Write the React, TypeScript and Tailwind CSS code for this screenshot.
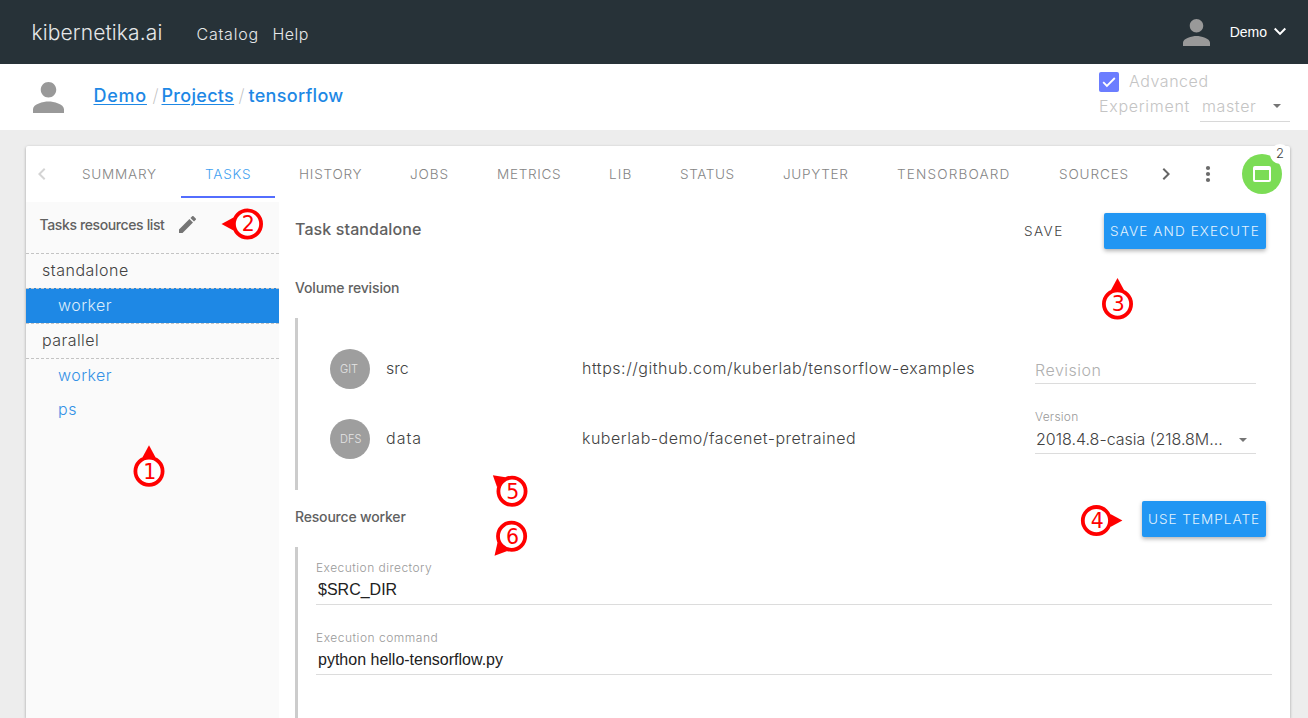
import React from "react";

const tabs = [
  { label: "SUMMARY", cls: "w-[123px] tracking-[0.75px]" },
  { label: "TASKS", cls: "w-[94px] tracking-[0.75px]", active: true },
  { label: "HISTORY", cls: "w-[111px] tracking-[0.75px]" },
  { label: "JOBS", cls: "w-[87px] tracking-[0.9px]" },
  { label: "METRICS", cls: "w-[112px] tracking-[0.65px]" },
  { label: "LIB", cls: "w-[71px] tracking-[1.1px]" },
  { label: "STATUS", cls: "w-[103px] tracking-[0.55px]" },
  { label: "JUPYTER", cls: "w-[114px] tracking-[0.65px]" },
  { label: "TENSORBOARD", cls: "w-[162px] tracking-[1.15px]" },
  { label: "SOURCES", cls: "w-[118px] tracking-[0.85px]" },
];

const markers = [
  { n: "1", angle: 0, tip: 26, dx: 0, dy: 0.3, cls: "left-[119px] top-[441px]" },
  { n: "2", angle: -90, tip: 26, dx: 0.5, dy: 0, cls: "left-[217px] top-[194px]" },
  { n: "3", angle: 0, tip: 26, dx: 0.5, dy: 0, cls: "left-[1087px] top-[274px]" },
  { n: "4", angle: 90, tip: 26, dx: 0.4, dy: 0.6, cls: "left-[1066px] top-[490px]" },
  { n: "5", angle: -50, tip: 25, dx: 0, dy: 0.2, cls: "left-[482px] top-[461px]" },
  { n: "6", angle: -139, tip: 26, dx: 0.6, dy: 0.2, cls: "left-[481px] top-[506px]" },
];

function Person({ className }: { className: string }) {
  return (
    <svg viewBox="4 4 16 16" className={className} fill="#999">
      <path d="M12 12c2.21 0 4-1.79 4-4s-1.79-4-4-4-4 1.79-4 4 1.79 4 4 4zm0 2c-2.67 0-8 1.34-8 4v2h16v-2c0-2.66-5.33-4-8-4z" />
    </svg>
  );
}

function Chevron({ d, className }: { d: string; className: string }) {
  return (
    <svg viewBox="0 0 24 24" className={className} fill="currentColor">
      <path d={d} />
    </svg>
  );
}

function Caret() {
  return (
    <svg viewBox="0 0 8 4" className="mt-px h-1 w-2 shrink-0" fill="#757575">
      <path d="M0 0h8L4 4z" />
    </svg>
  );
}

function Marker({ n, angle, tip, dx, dy, cls }: {
  n: string; angle: number; tip: number; dx: number; dy: number; cls: string;
}) {
  return (
    <svg viewBox="-30 -30 60 60" className={`absolute h-[60px] w-[60px] ${cls}`}>
      <g transform={`translate(${dx} ${dy})`}>
        <path d={`M0 ${-tip}L6.5 -14H-6.5z`} fill="#f00" transform={`rotate(${angle})`} />
        <circle r="13.6" fill="#fff" stroke="#f00" strokeWidth="3.8" />
        <text x="0.8" y="7.3" textAnchor="middle" fill="#f00" className="font-['DejaVu_Sans'] text-[20.5px] font-normal">
          {n}
        </text>
      </g>
    </svg>
  );
}

function Volume({ badge, name, url, nameCls, urlCls, children }: {
  badge: string; name: string; url: string; nameCls: string; urlCls: string; children: React.ReactNode;
}) {
  return (
    <div className="flex h-[70px] items-center">
      <div className="flex h-10 w-10 shrink-0 items-center rounded-full bg-[#9e9e9e] pl-[10px] text-[11px] text-[#e4e4e4]">{badge}</div>
      <div className={`w-[196px] shrink-0 pb-[2px] pl-4 ${nameCls}`}>{name}</div>
      <div className={`w-[469px] shrink-0 pb-[2px] pl-4 ${urlCls}`}>{url}</div>
      <div className="flex h-full w-[221px] shrink-0 flex-col">{children}</div>
    </div>
  );
}

export default function App() {
  return (
    <div className="relative flex h-[718px] w-[1308px] flex-col overflow-hidden bg-[#ededed] font-['Inter',sans-serif] text-base font-light text-[#424242]">
      <header className="flex h-16 shrink-0 items-center bg-[#273238] text-[#e6e8e9]">
        <div className="w-[165px] pt-px pl-[31.5px] text-[21px] tracking-[0.12px]">kibernetika.ai</div>
        <nav className="flex flex-1 pt-[3px]">
          <span className="w-[76px] pl-[31.5px] tracking-[0.76px]">Catalog</span>
          <span className="pl-[31.5px] tracking-[0.5px]">Help</span>
        </nav>
        <Person className="mr-[20px] h-[27px] w-[27px]" />
        <span className="font-['Liberation_Sans',sans-serif] text-sm font-normal text-white">Demo</span>
        <Chevron className="mr-4 ml-px h-6 w-6 text-white" d="M7.41 7.84L12 12.42l4.59-4.58L18 9.25l-6 6-6-6z" />
      </header>

      <section className="flex h-[66px] shrink-0 bg-white">
        <Person className="mt-[18px] ml-[33px] h-[31px] w-[31px]" />
        <div className="flex flex-1 pt-[18px] pl-[29.5px] text-lg leading-[27px] font-medium text-[#1e88e5]">
          <span className="w-[54px] tracking-[0.75px] underline decoration-1 underline-offset-2">Demo</span>
          <span className="w-[14px] pl-[5px] font-extralight text-[#bbb]">/</span>
          <span className="w-[73px] tracking-[0.3px] underline decoration-1 underline-offset-2">Projects</span>
          <span className="w-[14px] pl-[4px] font-extralight text-[#bbb]">/</span>
          <span className="tracking-[0.3px]">tensorflow</span>
        </div>
        <div className="w-[209px] pt-2 text-[#c4c4c4]">
          <div className="flex h-5 items-center">
            <div className="mr-[10px] flex h-5 w-5 items-center justify-center rounded-[2px] bg-[#6b7dff]">
              <svg viewBox="0 0 20 20" className="h-5 w-5" fill="none" stroke="#fff" strokeWidth="1.8">
                <path d="M4.2 10.2l3.7 3.7L15.8 6" />
              </svg>
            </div>
            <span className="pb-[2px] tracking-[0.55px]">Advanced</span>
          </div>
          <div className="flex h-[30px]">
            <span className="w-[101px] pt-[2px] tracking-[0.7px]">Experiment</span>
            <div className="flex w-[90px] items-center border-b border-[#d8d8d8] pb-0.5">
              <span className="w-[73px] pl-0.5 tracking-[0.62px]">master</span>
              <Caret />
            </div>
          </div>
        </div>
      </section>

      <main className="mt-4 ml-[26px] flex w-[1264px] flex-1 flex-col rounded-t-[2px] bg-white shadow-[0_1px_3px_rgba(0,0,0,0.35)]">
        <div className="flex h-14 shrink-0 items-center">
          <div className="flex w-8 justify-center text-[#d4d4d4]">
            <Chevron className="h-6 w-6" d="M15.41 7.41L14 6l-6 6 6 6 1.41-1.41L10.83 12z" />
          </div>
          {tabs.map((t) => (
            <div
              key={t.label}
              className={`mb-1 flex h-[52px] items-center border-b-2 pt-[6px] pl-6 text-[13.6px] whitespace-nowrap ${t.cls} ${
                t.active ? "border-[#536dfe] text-[#3f9ff0]" : "border-transparent text-[#858585]"
              }`}
            >
              {t.label}
            </div>
          ))}
          <Chevron className="ml-[1px] h-6 w-6 text-[#666]" d="M10 6L8.59 7.41 13.17 12l-4.58 4.59L10 18l6-6z" />
          <svg viewBox="0 0 24 24" className="ml-[18px] h-6 w-6" fill="#6b6b6b">
            <circle cx="12" cy="6" r="2.1" />
            <circle cx="12" cy="12" r="2.1" />
            <circle cx="12" cy="18" r="2.1" />
          </svg>
          <div className="relative ml-[22px] flex h-10 w-10 items-center justify-center rounded-full bg-[#7bdc55]">
            <svg viewBox="0 0 20 18" className="h-[18px] w-5" fill="#fff">
              <path fillRule="evenodd" d="M3 1h14a2 2 0 0 1 2 2v12a2 2 0 0 1-2 2H3a2 2 0 0 1-2-2V3a2 2 0 0 1 2-2zm0 4v10h14V5z" />
            </svg>
            <span className="absolute -top-[10px] -right-[8px] flex h-5 w-5 items-center justify-center rounded-full bg-white text-[13px] text-[#424242]">2</span>
          </div>
        </div>

        <div className="flex flex-1">
          <aside className="w-[253px] bg-[#fafafa]">
            <div className="flex h-[51px] pt-[13px] pl-[13.5px]">
              <span className="w-[139.5px] text-sm font-medium tracking-[-0.38px] whitespace-nowrap text-[#616161]">Tasks resources list</span>
              <svg viewBox="3 3 18 18" className="mt-px h-[17px] w-[17px]" fill="#757575">
                <path d="M3 17.25V21h3.75L17.81 9.94l-3.75-3.75L3 17.25zM20.71 7.04a1 1 0 0 0 0-1.41l-2.34-2.34a1 1 0 0 0-1.41 0l-1.83 1.83 3.75 3.75 1.83-1.83z" />
              </svg>
            </div>
            <div className="flex h-[35px] items-center border-t border-dashed border-[#c4c4c4] pb-[2px] pl-4 tracking-[0.51px]">standalone</div>
            <div className="flex h-[35px] items-center border-t border-dashed border-[#c4c4c4] bg-[#1e88e5] pb-[2px] pl-8 tracking-[0.45px] text-[#dcecfa]">worker</div>
            <div className="flex h-[35px] items-center border-t border-dashed border-[#c4c4c4] pb-[2px] pl-4 tracking-[0.45px]">parallel</div>
            <div className="flex h-[35px] items-center border-t border-dashed border-[#c4c4c4] pb-[2px] pl-8 tracking-[0.45px] text-[#3391e6]">worker</div>
            <div className="flex h-[34px] items-center pb-[2px] pl-8 tracking-[0.6px] text-[#3391e6]">ps</div>
          </aside>

          <div className="flex flex-1 flex-col pl-4">
            <div className="flex h-[72px] items-start pt-[11px] pr-6">
              <h1 className="flex-1 pt-1 font-medium tracking-[0.12px] text-[#616161]">Task standalone</h1>
              <span className="w-[80px] pt-2 text-[13.6px] leading-5 tracking-[1.4px]">SAVE</span>
              <button className="h-9 w-[162px] rounded-[2px] bg-[#2196f3] pt-px text-[13.6px] tracking-[1.08px] whitespace-nowrap text-[#e3f2fd] shadow-[0_2px_4px_rgba(0,0,0,0.3)]">SAVE AND EXECUTE</button>
            </div>
            <h2 className="h-11 pt-[4px] text-sm font-medium tracking-[-0.15px] text-[#616161]">Volume revision</h2>
            <div className="h-[172px] border-l-[3px] border-[#ccc] pt-4 pl-8">
              <Volume badge="GIT" name="src" url="https://github.com/kuberlab/tensorflow-examples" nameCls="" urlCls="tracking-[0.52px]">
                <div className="mt-[18px] flex h-8 items-center border-b border-[#dcdcdc] pt-[5px] tracking-[0.5px] text-[#b0b0b0]">Revision</div>
              </Volume>
              <Volume badge="DFS" name="data" url="kuberlab-demo/facenet-pretrained" nameCls="tracking-[1px]" urlCls="tracking-[0.49px]">
                <div className="pt-[5px] text-xs leading-4 tracking-[0.22px] text-[#999]">Version</div>
                <div className="flex h-[29px] items-center border-b border-[#dcdcdc]">
                  <span className="w-[204px] pl-px whitespace-nowrap">2018.4.8-casia (218.8M...</span>
                  <Caret />
                </div>
              </Volume>
            </div>
            <div className="flex h-[57px] pt-[11px] pr-6">
              <h2 className="flex-1 pt-[6px] text-sm font-medium tracking-[-0.18px] text-[#616161]">Resource worker</h2>
              <button className="h-9 w-[124px] rounded-[2px] bg-[#2196f3] pt-px text-[13.6px] tracking-[0.98px] whitespace-nowrap text-[#e3f2fd] shadow-[0_2px_4px_rgba(0,0,0,0.3)]">USE TEMPLATE</button>
            </div>
            <div className="flex-1 border-l-[3px] border-[#ccc] pt-[13px] pr-[18px] pl-[18px]">
              <div className="h-[70px]">
                <div className="text-xs leading-4 tracking-[0.46px] text-[#999]">Execution directory</div>
                <div className="h-[29px] border-b border-[#dcdcdc] pt-[2px] pl-0.5 font-['Liberation_Sans',sans-serif] font-normal text-[#212121]">$SRC_DIR</div>
              </div>
              <div className="h-[70px]">
                <div className="text-xs leading-4 tracking-[0.51px] text-[#999]">Execution command</div>
                <div className="h-[29px] border-b border-[#dcdcdc] pt-[2px] pl-0.5 font-['Liberation_Sans',sans-serif] font-normal text-[#212121]">python hello-tensorflow.py</div>
              </div>
            </div>
          </div>
        </div>
      </main>

      {markers.map((m) => (
        <Marker key={m.n} {...m} />
      ))}
    </div>
  );
}
